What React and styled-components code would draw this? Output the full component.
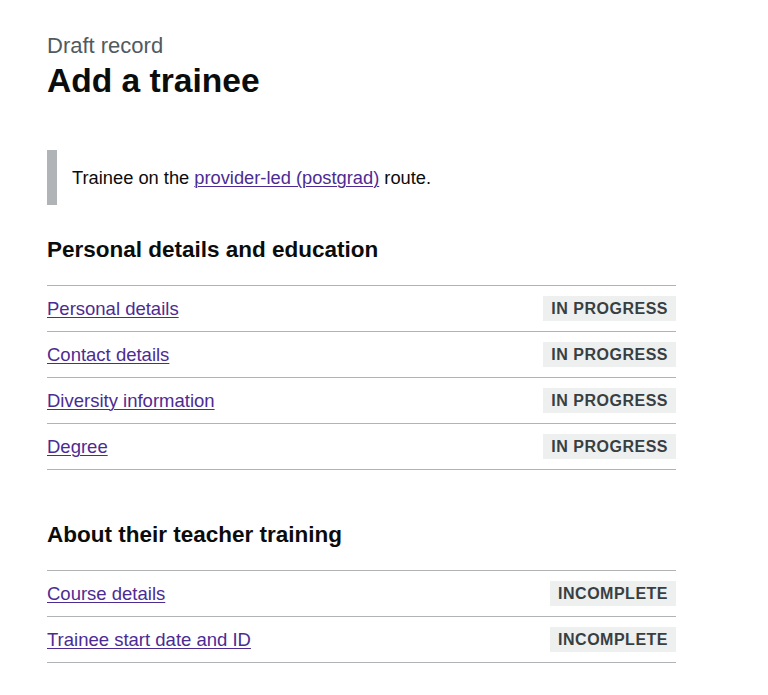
import React from 'react'
import styled, { createGlobalStyle } from 'styled-components'

const GlobalStyle = createGlobalStyle`
    body {
        margin: 0;
        background: #ffffff;
        font-family: "Liberation Sans", Arial, sans-serif;
        color: #0b0c0c;
    }
`

const Page = styled.main`
    padding: 31px 47px 40px;
    max-width: 629px;
`

const Caption = styled.span`
    display: block;
    font-size: 22px;
    line-height: 30px;
    color: #505a5f;
`

const Title = styled.h1`
    margin: 0 0 49px;
    font-size: 33.6px;
    line-height: 40px;
    font-weight: 700;
`

const Inset = styled.div`
    border-left: 10px solid #b1b4b6;
    padding: 15px;
    font-size: 18.3px;
    line-height: 25px;
    margin-bottom: 30px;
`

const Link = styled.a`
    color: #4c2c92;
    text-decoration: underline;
    text-underline-offset: 2px;
    text-decoration-thickness: 1px;
`

const SectionTitle = styled.h2`
    margin: 0 0 20px;
    font-size: 22.5px;
    line-height: 30px;
    font-weight: 700;
`

const TaskList = styled.ul`
    list-style: none;
    margin: 0 0 50px;
    padding: 0;
    border-bottom: 1px solid #b1b4b6;
`

const Task = styled.li`
    display: flex;
    justify-content: space-between;
    align-items: center;
    height: 45px;
    border-top: 1px solid #b1b4b6;
    font-size: 18.5px;
`

const Tag = styled.strong`
    display: inline-block;
    padding: 5px 8px 4px;
    background: #eeefef;
    color: #383f43;
    font-size: 16px;
    line-height: 16px;
    font-weight: 700;
    letter-spacing: 0.5px;
    text-transform: uppercase;
`

const sections = [
    {
        title: 'Personal details and education',
        tasks: [
            ['Personal details', 'In progress'],
            ['Contact details', 'In progress'],
            ['Diversity information', 'In progress'],
            ['Degree', 'In progress'],
        ],
    },
    {
        title: 'About their teacher training',
        tasks: [
            ['Course details', 'Incomplete'],
            ['Trainee start date and ID', 'Incomplete'],
        ],
    },
]

export default function App() {
    return (
        <>
            <GlobalStyle />
            <Page>
                <Caption>Draft record</Caption>
                <Title>Add a trainee</Title>
                <Inset>
                    Trainee on the <Link href="#">provider-led (postgrad)</Link> route.
                </Inset>
                {sections.map(section => (
                    <section key={section.title}>
                        <SectionTitle>{section.title}</SectionTitle>
                        <TaskList>
                            {section.tasks.map(([name, status]) => (
                                <Task key={name}>
                                    <Link href="#">{name}</Link>
                                    <Tag>{status}</Tag>
                                </Task>
                            ))}
                        </TaskList>
                    </section>
                ))}
            </Page>
        </>
    )
}
